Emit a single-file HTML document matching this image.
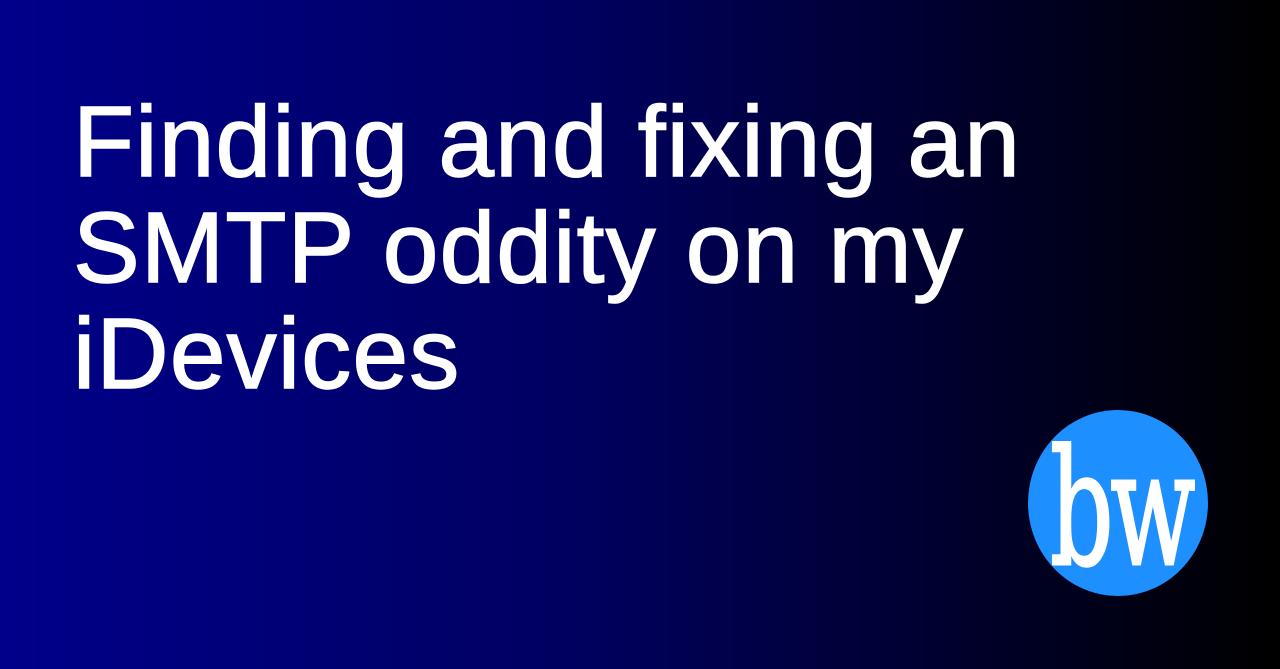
<!DOCTYPE html>
<html><head><style>
html,body{margin:0;padding:0}
body{width:1280px;height:669px;overflow:hidden;position:relative;background:linear-gradient(to right,#00008a 0%,#000060 45%,#000000 100%);font-family:"Liberation Sans",sans-serif}
.t{position:absolute;left:73px;top:89px;color:#fff;font-size:100px;line-height:106px;white-space:nowrap;letter-spacing:1.2px;-webkit-text-stroke:1.5px #fff}
.logo{position:absolute;left:1028px;top:410px;width:180px;height:186px;border-radius:50%;background:#1e8fff}
.bw{position:absolute;left:1050px;top:424px;color:#fff;font-family:"DejaVu Serif","Liberation Serif",serif;font-size:160px;line-height:170px;transform:scaleX(0.62);transform-origin:left top;letter-spacing:-5px;-webkit-text-stroke:3px #fff}
</style></head><body>
<div class="t">Finding and fixing an<br>SMTP oddity on my<br>iDevices</div>
<div class="logo"></div>
<div class="bw">bw</div>
</body></html>
